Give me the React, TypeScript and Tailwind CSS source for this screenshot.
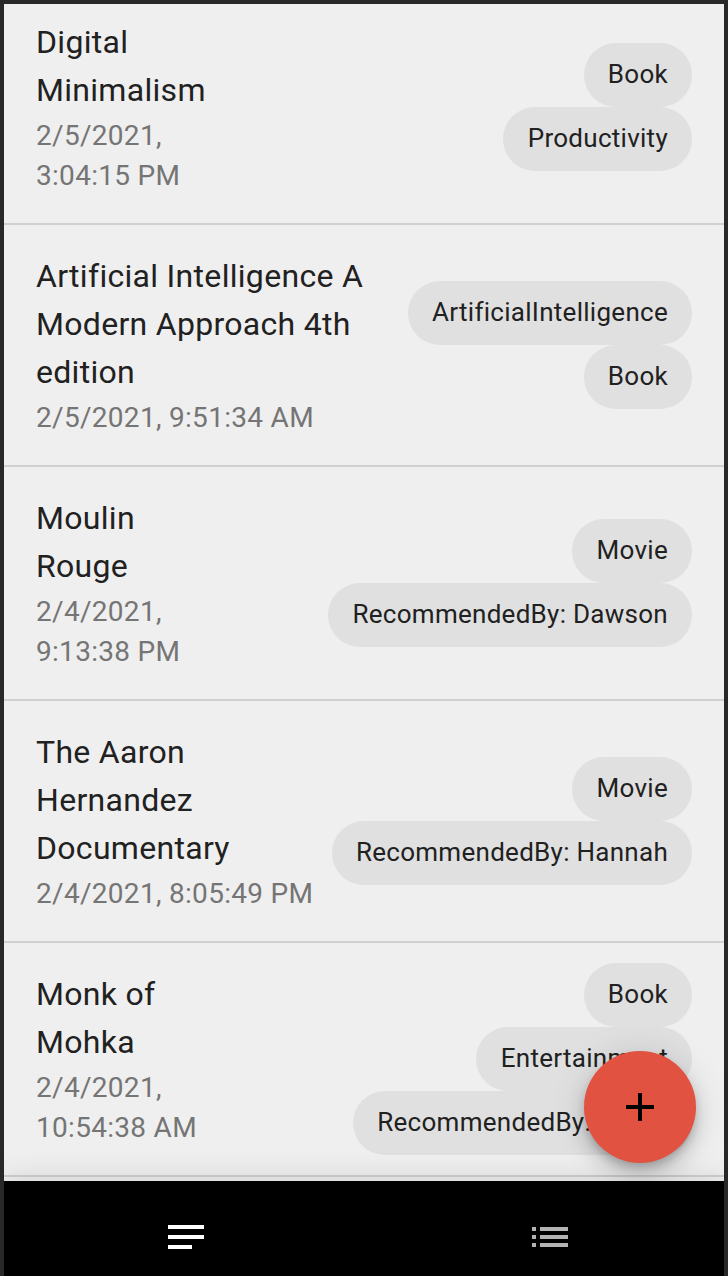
type Entry = { title: string[]; date: string[]; tags: string[] };

const entries: Entry[] = [
  { title: ["Digital", "Minimalism"], date: ["2/5/2021,", "3:04:15 PM"], tags: ["Book", "Productivity"] },
  {
    title: ["Artificial Intelligence A", "Modern Approach 4th", "edition"],
    date: ["2/5/2021, 9:51:34 AM"],
    tags: ["ArtificialIntelligence", "Book"],
  },
  { title: ["Moulin", "Rouge"], date: ["2/4/2021,", "9:13:38 PM"], tags: ["Movie", "RecommendedBy: Dawson"] },
  {
    title: ["The Aaron", "Hernandez", "Documentary"],
    date: ["2/4/2021, 8:05:49 PM"],
    tags: ["Movie", "RecommendedBy: Hannah"],
  },
  {
    title: ["Monk of", "Mohka"],
    date: ["2/4/2021,", "10:54:38 AM"],
    tags: ["Book", "Entertainment", "RecommendedBy: Aaron"],
  },
];

function Row({ title, date, tags }: Entry) {
  return (
    <li className="flex items-center justify-between border-b-2 border-[#d0d0d0] px-8 py-[27px]">
      <div className="shrink-0 whitespace-nowrap">
        {title.map((line) => (
          <div key={line} className="text-[32px] leading-[48px] tracking-[0.00938em] text-[#212121]">
            {line}
          </div>
        ))}
        <div className="pt-0.5">
          {date.map((line) => (
            <div key={line} className="text-[28px] leading-10 tracking-[0.01071em] text-[#757575]">
              {line}
            </div>
          ))}
        </div>
      </div>
      <div className="-my-7 flex flex-col items-end">
        {tags.map((tag) => (
          <span
            key={tag}
            className="flex h-16 items-center whitespace-nowrap rounded-full bg-[#e0e0e0] pr-6 pb-0.5 pl-[24.3px] text-[26px] tracking-[0.01071em] text-[#212121]"
          >
            {tag}
          </span>
        ))}
      </div>
    </li>
  );
}

export default function App() {
  return (
    <div className="relative flex h-[1276px] w-[728px] flex-col overflow-hidden border-x-4 border-t-4 border-[#282828] bg-[#efefef] font-[Roboto,sans-serif]">
      <main className="h-[1177px] shrink-0 overflow-hidden">
        <ul className="-mt-[13px]">
          {entries.map((entry) => (
            <Row key={entry.title[0]} {...entry} />
          ))}
        </ul>
      </main>
      <nav className="relative flex flex-1 justify-between bg-black pr-[150px] pl-[158px] shadow-[0_0_30px_rgba(0,0,0,0.14)]">
        <button className="flex items-center justify-center pt-4" aria-label="Notes">
          <svg width="48" height="48" viewBox="0 0 24 24" fill="#fff" shapeRendering="crispEdges">
            <path d="M3 18h12v-2H3v2zM3 6v2h18V6H3zm0 7h18v-2H3v2z" />
          </svg>
        </button>
        <button className="flex items-center justify-center pt-4" aria-label="List">
          <svg width="48" height="48" viewBox="0 0 24 24" fill="#b3b3b3" shapeRendering="crispEdges">
            <path d="M3 13h2v-2H3v2zm0 4h2v-2H3v2zm0-8h2V7H3v2zm4 4h14v-2H7v2zm0 4h14v-2H7v2zM7 7v2h14V7H7z" />
          </svg>
        </button>
      </nav>
      <button
        aria-label="Add"
        className="absolute right-7 top-[1047px] flex size-28 items-center justify-center rounded-full bg-[#e25241] shadow-[0_6px_10px_-2px_rgba(0,0,0,0.2),0_12px_20px_0_rgba(0,0,0,0.14),0_2px_36px_0_rgba(0,0,0,0.12)]"
      >
        <svg width="48" height="48" viewBox="0 0 24 24" fill="#000" shapeRendering="crispEdges">
          <path d="M19 13h-6v6h-2v-6H5v-2h6V5h2v6h6v2z" />
        </svg>
      </button>
    </div>
  );
}
